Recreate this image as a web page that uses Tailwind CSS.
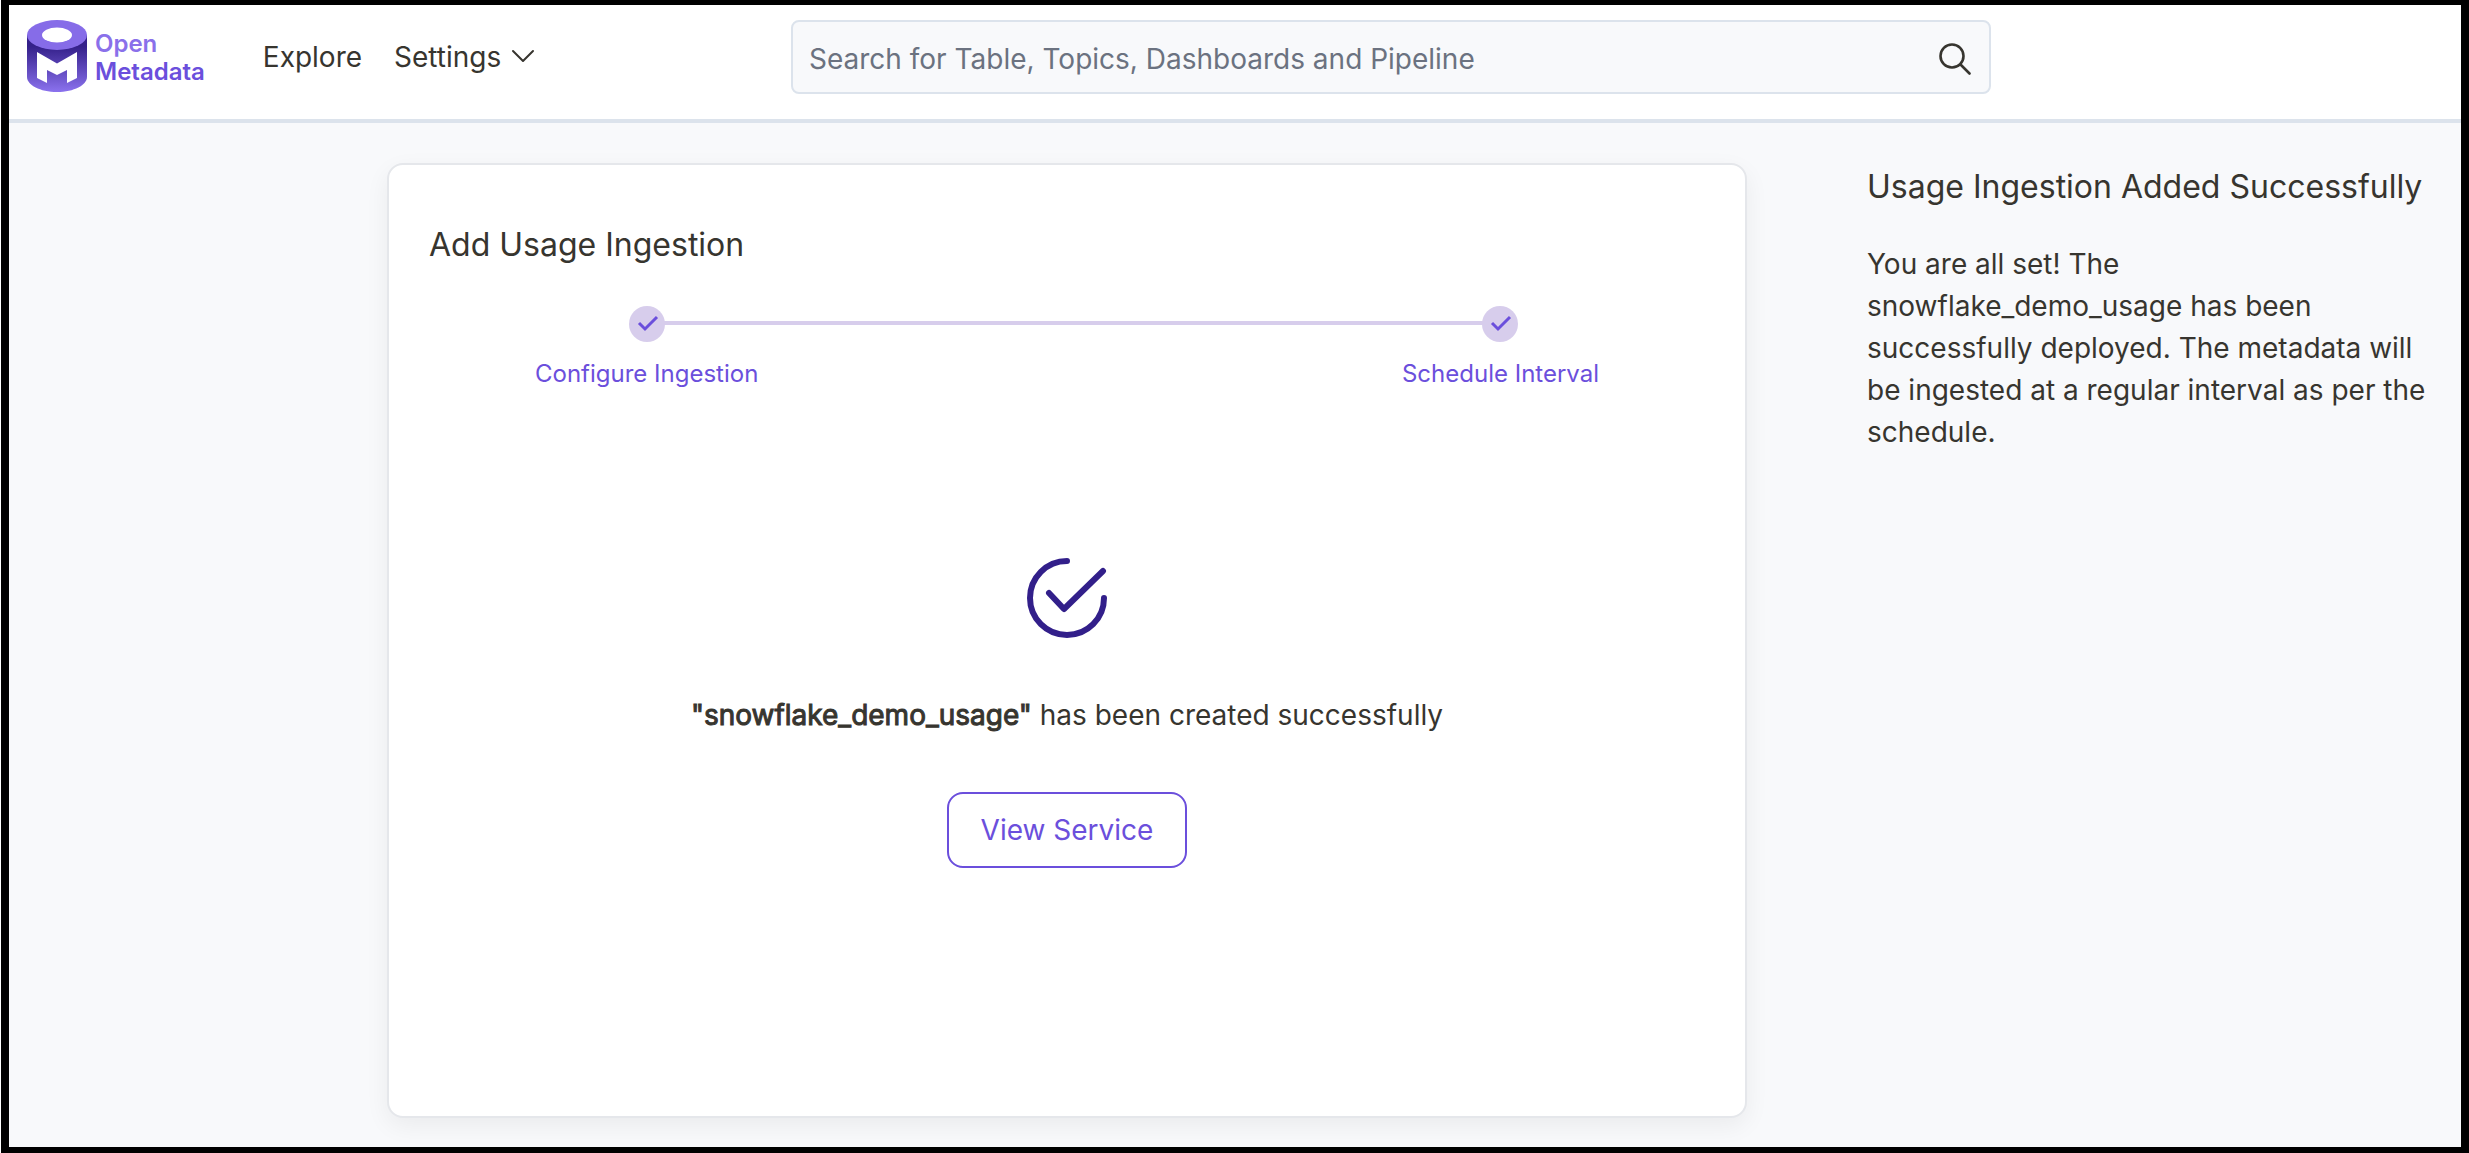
<!DOCTYPE html>
<html lang="en">
<head>
<meta charset="utf-8">
<meta name="viewport" content="width=device-width, initial-scale=1">
<title>Add Usage Ingestion - OpenMetadata</title>
<script src="https://cdn.jsdelivr.net/npm/@tailwindcss/browser@4"></script>
</head>
<body class="bg-white pl-px font-['Inter',sans-serif] text-[28px] leading-[42px] text-[#37352f]">
<div class="flex min-h-screen flex-col border-t-[5px] border-r-8 border-b-[6px] border-l-8 border-black bg-[#f8f9fb]">
  <header class="grid grid-cols-[782fr_1200fr_470fr] items-start border-b-4 border-[#dce3ec] bg-white pt-[15px] pb-[25px]">
    <div class="flex items-center pl-[18px]">
      <a href="#" class="flex items-center gap-2" aria-label="Open Metadata">
        <svg class="h-[72px] w-[60px]" viewBox="0 0 60 72" aria-hidden="true">
          <defs>
            <linearGradient id="side" x1="0" y1="0" x2="0" y2="1">
              <stop offset="0.2" stop-color="#34208a"/>
              <stop offset="1" stop-color="#8b72ee"/>
            </linearGradient>
          </defs>
          <path d="M0 15V57C0 65 13 72 30 72S60 65 60 57V15Z" fill="url(#side)"/>
          <ellipse cx="30" cy="15" rx="30" ry="15" fill="#866ce8"/>
          <ellipse cx="30" cy="15" rx="15" ry="7.5" fill="#fff"/>
          <path d="M10 32L30 43.500L50 32V58L40 63V50L30 55L20 50V63L10 58Z" fill="#fff"/>
        </svg>
        <span class="flex flex-col pt-1 text-[24px] leading-[28px] font-semibold text-[#6b4fdc]"><span class="text-[#8a70ea]">Open</span><span>Metadata</span></span>
      </a>
      <nav class="flex items-center gap-8 pt-0.5 pl-[58px]">
        <a href="#">Explore</a>
        <button type="button" class="flex items-center gap-2.5">Settings
          <svg class="h-6 w-6" viewBox="0 0 24 24" fill="none" stroke="currentColor" stroke-width="2" stroke-linecap="round" stroke-linejoin="round" aria-hidden="true"><path d="M2 6L12 16L22 6"/></svg>
        </button>
      </nav>
    </div>
    <form class="flex h-[74px] items-center rounded-lg border-2 border-[#dce3ec] bg-[#f8f9fb] pt-1 pr-[18px] pl-4" role="search">
      <input type="search" aria-label="Search" placeholder="Search for Table, Topics, Dashboards and Pipeline" class="min-w-0 flex-1 bg-transparent outline-none placeholder:text-[#6b7280]">
      <button type="button" aria-label="Search">
        <svg class="h-8 w-8" viewBox="0 0 32 32" fill="none" stroke="currentColor" stroke-width="2.600" stroke-linecap="round" aria-hidden="true"><circle cx="13" cy="13" r="11.500"/><path d="M21.500 21.500L30.500 30.500"/></svg>
      </button>
    </form>
  </header>

  <main class="grid flex-1 grid-cols-[1738fr_714fr] pt-10 pb-[29px]">
    <section class="ml-[21.750%] flex flex-col rounded-2xl border-2 border-[#e5e7eb] bg-white px-10 pt-[59px] shadow-[0_8px_24px_rgba(0,0,0,0.06)]">
      <h1 class="text-[32px] leading-[42px]">Add Usage Ingestion</h1>
      <ol class="relative mx-[106px] mt-10 flex justify-between text-[24px] leading-9 text-[#6b4fdc]">
        <li class="flex flex-col items-center gap-3.5">
          <span class="z-10 flex size-9 items-center justify-center rounded-full bg-[#d7cdec]">
            <svg class="size-6" viewBox="0 0 24 24" fill="none" stroke="currentColor" stroke-width="3" aria-hidden="true"><path d="M4 11L10 17L22 5"/></svg>
          </span>
          Configure Ingestion
        </li>
        <li class="flex flex-col items-center gap-3.5">
          <span class="z-10 flex size-9 items-center justify-center rounded-full bg-[#d7cdec]">
            <svg class="size-6" viewBox="0 0 24 24" fill="none" stroke="currentColor" stroke-width="3" aria-hidden="true"><path d="M4 11L10 17L22 5"/></svg>
          </span>
          Schedule Interval
        </li>
        <li class="absolute top-[15px] right-[100px] left-[112px] h-1 bg-[#d7cdec]" aria-hidden="true"></li>
      </ol>
      <div class="flex flex-col items-center pt-[166px]">
        <svg class="size-20" viewBox="0 0 80 80" fill="none" stroke="#321f8a" stroke-width="6" stroke-linecap="round" stroke-linejoin="round" aria-hidden="true"><path d="M40 3A37 37 0 1 0 77 40"/><path d="M22 35L37 51L76 13"/></svg>
        <p class="pt-14"><strong class="font-normal [-webkit-text-stroke:1px_currentColor]">"snowflake_demo_usage"</strong> has been created successfully</p>
        <button type="button" class="mt-14 h-[76px] rounded-2xl border-2 border-[#6b4fdc] px-8 text-[#6b4fdc]">View Service</button>
      </div>
    </section>
    <aside class="pr-6 pl-[120px]">
      <h2 class="text-[32px] leading-[48px]">Usage Ingestion Added Successfully</h2>
      <p class="pt-8">You are all set! The snowflake_demo_usage has been successfully deployed. The metadata will be ingested at a regular interval as per the schedule.</p>
    </aside>
  </main>
</div>
</body>
</html>
